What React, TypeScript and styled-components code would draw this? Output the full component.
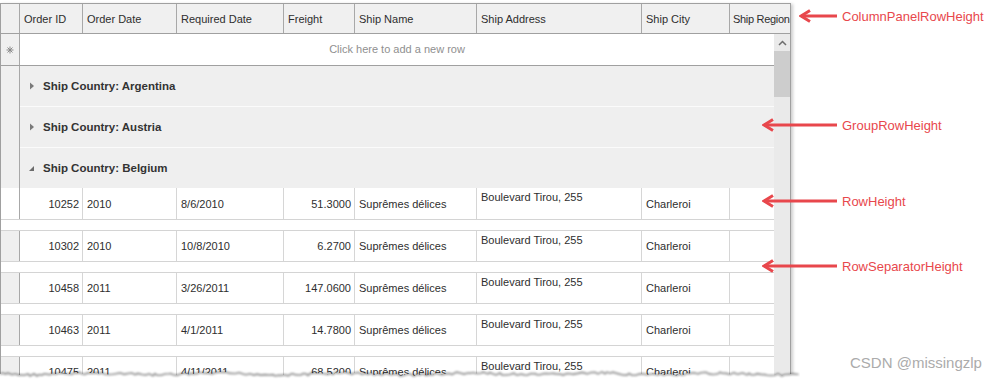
import React from 'react';
import styled, { createGlobalStyle } from 'styled-components';

type Column = { key: keyof Order; title: string; width?: number; align?: 'left' | 'right'; top?: boolean };
type Order = { id: string; date: string; req: string; freight: string; name: string; addr: string; city: string; region: string };

const columns: Column[] = [
  { key: 'id', title: 'Order ID', width: 63, align: 'right' },
  { key: 'date', title: 'Order Date', width: 94 },
  { key: 'req', title: 'Required Date', width: 107 },
  { key: 'freight', title: 'Freight', width: 71, align: 'right' },
  { key: 'name', title: 'Ship Name', width: 122 },
  { key: 'addr', title: 'Ship Address', width: 165, top: true },
  { key: 'city', title: 'Ship City', width: 88 },
  { key: 'region', title: 'Ship Region' },
];

const base = { name: 'Suprêmes délices', addr: 'Boulevard Tirou, 255', city: 'Charleroi', region: '' };
const orders: Order[] = [
  { id: '10252', date: '2010', req: '8/6/2010', freight: '51.3000', ...base },
  { id: '10302', date: '2010', req: '10/8/2010', freight: '6.2700', ...base },
  { id: '10458', date: '2011', req: '3/26/2011', freight: '147.0600', ...base },
  { id: '10463', date: '2011', req: '4/1/2011', freight: '14.7800', ...base },
  { id: '10475', date: '2011', req: '4/11/2011', freight: '68.5200', ...base },
];

const groups = [
  { country: 'Argentina', expanded: false },
  { country: 'Austria', expanded: false },
  { country: 'Belgium', expanded: true },
];

const callouts = [
  { label: 'ColumnPanelRowHeight', y: 16, head: 799 },
  { label: 'GroupRowHeight', y: 125, head: 762 },
  { label: 'RowHeight', y: 201, head: 762 },
  { label: 'RowSeparatorHeight', y: 266, head: 762 },
];

const GlobalStyles = createGlobalStyle`
  html, body {
    margin: 0;
    padding: 0;
    background: #fff;
    overflow: hidden;
  }

  body {
    font-family: 'Liberation Sans', Arial, sans-serif;
  }

  * {
    box-sizing: border-box;
  }
`;

const Page = styled.div`
  position: relative;
  width: 999px;
  height: 382px;
  overflow: hidden;
  padding-top: 3px;
`;

const GridBox = styled.div`
  width: 791px;
  border: 1px solid #a0a0a0;
  background: #fff;
  font-size: 11px;
  color: #2e2e2e;
  box-shadow: 2px 1px 3px rgba(0, 0, 0, 0.2);
`;

const HeaderRow = styled.div`
  display: flex;
  height: 30px;
  background: #f0f0f0;
  border-bottom: 1px solid #a0a0a0;
`;

const Indicator = styled.div<{ $bg?: string }>`
  flex: 0 0 19px;
  background: ${(p) => p.$bg ?? '#f0f0f0'};
  border-right: 1px solid #a8a8a8;
  display: flex;
  align-items: center;
  justify-content: center;
`;

const HeaderCell = styled.div<{ $w?: number }>`
  flex: ${(p) => (p.$w ? `0 0 ${p.$w}px` : '1 1 auto')};
  border-right: ${(p) => (p.$w ? '1px solid #a8a8a8' : 'none')};
  display: flex;
  align-items: center;
  padding-left: ${(p) => (p.$w ? '4px' : '3px')};
  letter-spacing: ${(p) => (p.$w ? '0' : '-0.3px')};
  white-space: nowrap;
  overflow: hidden;
`;

const Body = styled.div`
  display: flex;
`;

const Main = styled.div`
  flex: 1 1 auto;
  display: flex;
  flex-direction: column;
`;

const NewRow = styled.div`
  display: flex;
  height: 32px;
  border-bottom: 1px solid #a0a0a0;
`;

const NewRowText = styled.div`
  flex: 1;
  display: flex;
  align-items: center;
  justify-content: center;
  padding-bottom: 1px;
  color: #8f8f8f;
`;

const GroupRow = styled.div<{ $last?: boolean }>`
  display: flex;
  height: ${(p) => (p.$last ? '40px' : '41px')};
`;

const GroupContent = styled.div<{ $last?: boolean }>`
  flex: 1;
  display: flex;
  align-items: center;
  gap: 7px;
  padding-left: 8px;
  background: #efefef;
  border-bottom: ${(p) => (p.$last ? 'none' : '1px solid #fbfbfb')};
  font-weight: bold;
  font-size: 11.5px;
  color: #333;
`;

const DataRow = styled.div<{ $first?: boolean }>`
  display: flex;
  height: 32px;
  border-top: ${(p) => (p.$first ? 'none' : '1px solid #d4d4d4')};
  border-bottom: 1px solid #d4d4d4;
`;

const Cell = styled.div<{ $w?: number; $align?: 'left' | 'right'; $top?: boolean }>`
  flex: ${(p) => (p.$w ? `0 0 ${p.$w}px` : '1 1 auto')};
  border-right: ${(p) => (p.$w ? '1px solid #d6d6d6' : 'none')};
  display: flex;
  align-items: ${(p) => (p.$top ? 'flex-start' : 'center')};
  justify-content: ${(p) => (p.$align === 'right' ? 'flex-end' : 'flex-start')};
  padding: ${(p) => (p.$top ? '3px 3px 0 4px' : '0 3px 0 4px')};
  white-space: nowrap;
  overflow: hidden;
`;

const Separator = styled.div`
  height: 10px;
`;

const ScrollBar = styled.div`
  flex: 0 0 16px;
  display: flex;
  flex-direction: column;
  background: #eaeaea;
`;

const ScrollArrow = styled.div`
  height: 17px;
  display: flex;
  align-items: center;
  justify-content: center;
`;

const ScrollThumb = styled.div`
  height: 46px;
  background: #cdcdcd;
`;

const Callout = styled.div`
  position: absolute;
  height: 16px;
  display: flex;
  align-items: center;
  gap: 5px;
  color: #e8474c;
  font-size: 13px;
  white-space: nowrap;
`;

const Watermark = styled.div`
  position: absolute;
  left: 850px;
  top: 354px;
  font-size: 15px;
  color: #ababab;
`;

const TornEdge = styled.svg`
  position: absolute;
  left: 0;
  top: 366px;
`;

const Triangle = ({ expanded }: { expanded: boolean }) => (
  <svg width="8" height="8" viewBox="0 0 8 8">
    {expanded ? <polygon points="6,2 6,7 1,7" fill="#6b6b6b" /> : <polygon points="2,0.5 6,4 2,7.5" fill="#7a7a7a" />}
  </svg>
);

const NewRowMark = () => (
  <svg width="8" height="8" viewBox="0 0 8 8" stroke="#8a8a8a" strokeWidth="1">
    <line x1="4" y1="0.5" x2="4" y2="7.5" />
    <line x1="0.5" y1="4" x2="7.5" y2="4" />
    <line x1="1.5" y1="1.5" x2="6.5" y2="6.5" />
    <line x1="6.5" y1="1.5" x2="1.5" y2="6.5" />
  </svg>
);

const Arrow = ({ length }: { length: number }) => (
  <svg width={length} height="16" viewBox={`0 0 ${length} 16`}>
    <line x1="2" y1="8" x2={length} y2="8" stroke="#e8474c" strokeWidth="3" />
    <polyline points="11,2.5 2,8 11,13.5" fill="none" stroke="#e8474c" strokeWidth="3" strokeLinejoin="miter" />
  </svg>
);

// jagged "torn screenshot" edge across the bottom of the grid
const edgeLine = (() => {
  const pts: string[] = [];
  let seed = 7;
  const rnd = () => {
    seed = (seed * 9301 + 49297) % 233280;
    return seed / 233280;
  };
  for (let x = 0; x <= 798; x += 2 + Math.floor(rnd() * 3)) {
    const y = 8 + 0.8 * Math.sin(x * 0.05) + (rnd() - 0.5) * 2.6;
    pts.push(`${x},${y.toFixed(1)}`);
  }
  pts.push('798,8');
  return pts.join(' ');
})();

const App = () => (
  <Page>
    <GlobalStyles />
    <GridBox>
      <HeaderRow>
        <Indicator />
        {columns.map((c) => (
          <HeaderCell key={c.key} $w={c.width}>
            {c.title}
          </HeaderCell>
        ))}
      </HeaderRow>
      <Body>
        <Main>
          <NewRow>
            <Indicator>
              <NewRowMark />
            </Indicator>
            <NewRowText>Click here to add a new row</NewRowText>
          </NewRow>
          {groups.map((g, i) => (
            <GroupRow key={g.country} $last={i === groups.length - 1}>
              <Indicator />
              <GroupContent $last={i === groups.length - 1}>
                <Triangle expanded={g.expanded} />
                Ship Country: {g.country}
              </GroupContent>
            </GroupRow>
          ))}
          {orders.map((o, i) => (
            <React.Fragment key={o.id}>
              {i > 0 && <Separator />}
              <DataRow $first={i === 0}>
                <Indicator $bg={i === 0 ? '#fff' : '#efefef'} />
                {columns.map((c) => (
                  <Cell key={c.key} $w={c.width} $align={c.align} $top={c.top}>
                    {o[c.key]}
                  </Cell>
                ))}
              </DataRow>
            </React.Fragment>
          ))}
          <Separator />
        </Main>
        <ScrollBar>
          <ScrollArrow>
            <svg width="9" height="6" viewBox="0 0 9 6">
              <polyline points="1,5 4.5,1.5 8,5" fill="none" stroke="#6e6e6e" strokeWidth="1.5" />
            </svg>
          </ScrollArrow>
          <ScrollThumb />
        </ScrollBar>
      </Body>
    </GridBox>
    <TornEdge width="800" height="16" viewBox="0 0 800 16">
      <defs>
        <filter id="edge-blur" x="-5%" y="-100%" width="110%" height="300%">
          <feGaussianBlur stdDeviation="0.9" />
        </filter>
      </defs>
      <polygon points={`0,16 ${edgeLine} 800,16`} fill="#fff" />
      <polyline points={edgeLine} fill="none" stroke="rgba(0,0,0,0.45)" strokeWidth="1.6" filter="url(#edge-blur)" />
    </TornEdge>
    {callouts.map((c) => (
      <Callout key={c.label} style={{ left: c.head, top: c.y - 8 }}>
        <Arrow length={837 - c.head} />
        {c.label}
      </Callout>
    ))}
    <Watermark>CSDN @missingzlp</Watermark>
  </Page>
);

export default App;
